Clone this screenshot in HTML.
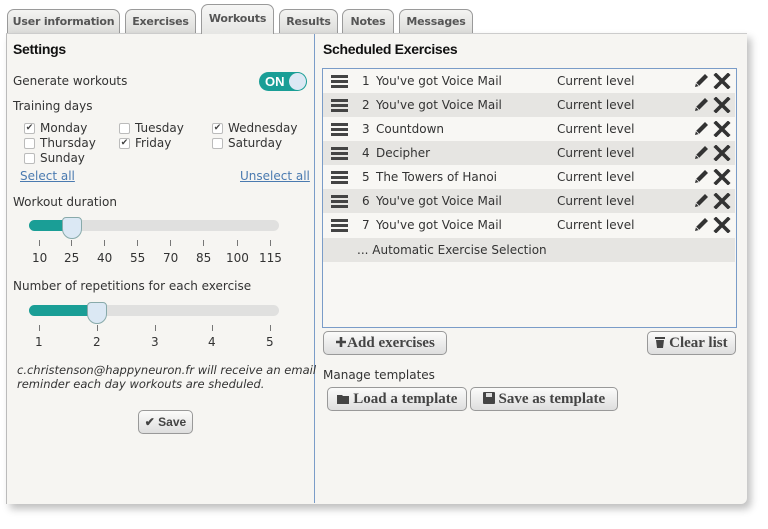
<!DOCTYPE html>
<html><head><style>
body{margin:0;width:768px;height:529px;background:#fff;font-family:"DejaVu Sans","Liberation Sans",sans-serif;color:#333;position:relative;overflow:hidden;font-size:12px}
.a{position:absolute;white-space:nowrap}
.tab{position:absolute;top:9px;height:24px;border:1px solid #9a9a9a;border-bottom:none;border-radius:7px 7px 0 0;background:linear-gradient(#f4f4f2,#dcdcda);font-weight:bold;font-size:11px;letter-spacing:-0.2px;color:#555;text-align:center;line-height:24px;box-sizing:border-box;white-space:nowrap}
.panel{position:absolute;left:6px;top:33px;width:740px;height:470px;background:#f6f5f2;border-left:1px solid #bbb;border-top:1px solid #ccc;box-shadow:4px 5px 8px rgba(0,0,0,.25);border-radius:0 0 6px 0}
.h{font-family:"Liberation Sans",sans-serif;font-weight:bold;font-size:14px;color:#111;letter-spacing:-.3px}
.cb{position:absolute;width:9px;height:9px;border:1px solid #bbb;background:#fff;border-radius:2px;font-size:9px;line-height:9px;text-align:center;color:#444}
.track{position:absolute;height:11px;background:#e0e0df;border-radius:6px}
.fill{position:absolute;height:11px;background:#1a9e96;border-radius:6px 0 0 6px}
.hd{position:absolute;width:20px;height:22px;background:#dbe8f4;border:1px solid #8aa;border-radius:4px 4px 10px 10px;box-sizing:border-box}
.tk{position:absolute;width:1px;height:6px;background:#777}
.btn{position:absolute;height:24px;border:1px solid #999;border-radius:5px;background:linear-gradient(#fbfbfa,#dedede);box-sizing:border-box;font-family:"Liberation Serif","DejaVu Serif",serif;font-weight:bold;font-size:15px;color:#444;line-height:22px;text-align:center;white-space:nowrap}
.btn svg{vertical-align:-1px}
.row{position:absolute;left:323px;width:412px;height:24px}
.row.g{background:#e6e5e2}
.row span{position:absolute;top:5px;font-size:12px;color:#333}
.hb{position:absolute;left:8px;top:6px;width:17px;height:3px;background:#444;box-shadow:0 5px 0 #444,0 10px 0 #444}
.ic{position:absolute;left:370px;top:4px}
</style></head><body>
<div class="tab" style="left:7px;width:113px">User information</div>
<div class="tab" style="left:125px;width:71px">Exercises</div>
<div class="tab" style="left:279px;width:59px">Results</div>
<div class="tab" style="left:342px;width:52px">Notes</div>
<div class="tab" style="left:399px;width:74px">Messages</div>
<div class="panel"></div>
<div class="tab" style="left:201px;top:4px;width:73px;height:30px;line-height:28px;background:linear-gradient(#f6f6f5,#e6e6e4);z-index:2">Workouts</div>
<div class="a" style="left:314px;top:34px;width:1px;height:469px;background:#7a9cc8"></div>

<div class="a h" style="left:13px;top:41px">Settings</div>
<div class="a" style="left:13px;top:74px">Generate workouts</div>
<div class="a" style="left:259px;top:72px;width:48px;height:19px;border-radius:10px;background:#1a9e96"></div>
<div class="a" style="left:265px;top:74px;color:#fff;font-weight:bold;font-family:'Liberation Sans',sans-serif;font-size:13px">ON</div>
<div class="a" style="left:289px;top:73px;width:17px;height:17px;border-radius:50%;background:#dce8f4"></div>
<div class="a" style="left:13px;top:99px">Training days</div>
<div class="cb" style="left:24px;top:123px">✔</div><div class="a" style="left:40px;top:121px">Monday</div>
<div class="cb" style="left:119px;top:123px"></div><div class="a" style="left:135px;top:121px">Tuesday</div>
<div class="cb" style="left:212px;top:123px">✔</div><div class="a" style="left:228px;top:121px">Wednesday</div>
<div class="cb" style="left:24px;top:138px"></div><div class="a" style="left:40px;top:136px">Thursday</div>
<div class="cb" style="left:119px;top:138px">✔</div><div class="a" style="left:135px;top:136px">Friday</div>
<div class="cb" style="left:212px;top:138px"></div><div class="a" style="left:228px;top:136px">Saturday</div>
<div class="cb" style="left:24px;top:153px"></div><div class="a" style="left:40px;top:151px">Sunday</div>
<div class="a" style="left:20px;top:169px;color:#4a7ab0;text-decoration:underline">Select all</div>
<div class="a" style="left:240px;top:169px;color:#4a7ab0;text-decoration:underline">Unselect all</div>

<div class="a" style="left:13px;top:195px">Workout duration</div>
<div class="track" style="left:29px;top:220px;width:250px"></div>
<div class="fill" style="left:29px;top:220px;width:42px"></div>
<div class="hd" style="left:62px;top:217px"></div>
<div class="tk" style="left:39px;top:240px"></div><div class="tk" style="left:71px;top:240px"></div><div class="tk" style="left:104px;top:240px"></div><div class="tk" style="left:137px;top:240px"></div><div class="tk" style="left:170px;top:240px"></div><div class="tk" style="left:203px;top:240px"></div><div class="tk" style="left:237px;top:240px"></div><div class="tk" style="left:270px;top:240px"></div>
<div class="a" style="left:32px;top:251px">10</div><div class="a" style="left:64px;top:251px">25</div><div class="a" style="left:97px;top:251px">40</div><div class="a" style="left:130px;top:251px">55</div><div class="a" style="left:163px;top:251px">70</div><div class="a" style="left:196px;top:251px">85</div><div class="a" style="left:226px;top:251px">100</div><div class="a" style="left:259px;top:251px">115</div>

<div class="a" style="left:13px;top:279px">Number of repetitions for each exercise</div>
<div class="track" style="left:29px;top:305px;width:250px"></div>
<div class="fill" style="left:29px;top:305px;width:68px"></div>
<div class="hd" style="left:87px;top:302px"></div>
<div class="tk" style="left:39px;top:325px"></div><div class="tk" style="left:97px;top:325px"></div><div class="tk" style="left:155px;top:325px"></div><div class="tk" style="left:212px;top:325px"></div><div class="tk" style="left:270px;top:325px"></div>
<div class="a" style="left:35px;top:335px">1</div><div class="a" style="left:93px;top:335px">2</div><div class="a" style="left:151px;top:335px">3</div><div class="a" style="left:208px;top:335px">4</div><div class="a" style="left:266px;top:335px">5</div>
<div class="a" style="left:17px;top:363px;font-style:italic;font-size:11.5px;line-height:14px">c.christenson@happyneuron.fr will receive an email<br>reminder each day workouts are sheduled.</div>
<div class="btn" style="left:138px;top:410px;width:55px;font-family:'Liberation Sans',sans-serif;font-size:12px">✔ Save</div>

<div class="a h" style="left:323px;top:41px">Scheduled Exercises</div>
<div class="a" style="left:322px;top:68px;width:413px;height:258px;border:1px solid #7a9cc8;background:#f8f7f4"></div>

<svg width="0" height="0" style="position:absolute"><defs>
<g id="pe"><path d="M12 1 L15 4 L6 13 L2 14 L3 10 Z" fill="#333"/><path d="M3 10 L6 13" stroke="#f6f6f6" stroke-width="0.8"/></g>
<g id="xx"><path d="M2 2 L14 14 M14 2 L2 14" stroke="#333" stroke-width="3.6" stroke-linecap="square"/></g>
</defs></svg>

<div class="row" style="top:69px"><i class="hb"></i><span style="left:39px">1</span><span style="left:53px">You've got Voice Mail</span><span style="left:234px">Current level</span><svg class="ic" width="40" height="16"><use href="#pe"/><use href="#xx" x="21"/></svg></div>
<div class="row g" style="top:93px"><i class="hb"></i><span style="left:39px">2</span><span style="left:53px">You've got Voice Mail</span><span style="left:234px">Current level</span><svg class="ic" width="40" height="16"><use href="#pe"/><use href="#xx" x="21"/></svg></div>
<div class="row" style="top:117px"><i class="hb"></i><span style="left:39px">3</span><span style="left:53px">Countdown</span><span style="left:234px">Current level</span><svg class="ic" width="40" height="16"><use href="#pe"/><use href="#xx" x="21"/></svg></div>
<div class="row g" style="top:141px"><i class="hb"></i><span style="left:39px">4</span><span style="left:53px">Decipher</span><span style="left:234px">Current level</span><svg class="ic" width="40" height="16"><use href="#pe"/><use href="#xx" x="21"/></svg></div>
<div class="row" style="top:165px"><i class="hb"></i><span style="left:39px">5</span><span style="left:53px">The Towers of Hanoi</span><span style="left:234px">Current level</span><svg class="ic" width="40" height="16"><use href="#pe"/><use href="#xx" x="21"/></svg></div>
<div class="row g" style="top:189px"><i class="hb"></i><span style="left:39px">6</span><span style="left:53px">You've got Voice Mail</span><span style="left:234px">Current level</span><svg class="ic" width="40" height="16"><use href="#pe"/><use href="#xx" x="21"/></svg></div>
<div class="row" style="top:213px"><i class="hb"></i><span style="left:39px">7</span><span style="left:53px">You've got Voice Mail</span><span style="left:234px">Current level</span><svg class="ic" width="40" height="16"><use href="#pe"/><use href="#xx" x="21"/></svg></div>
<div class="row g" style="top:238px"><span style="left:34px">... Automatic Exercise Selection</span></div>

<div class="btn" style="left:323px;top:331px;width:124px"><svg width="12" height="12"><path d="M6 1V11M1 6H11" stroke="#444" stroke-width="2.6"/></svg>Add exercises</div>
<div class="btn" style="left:647px;top:331px;width:89px"><svg width="10" height="12"><rect x="0" y="1" width="10" height="2" fill="#444"/><path d="M1 4H9L8 12H2Z" fill="#444"/></svg> Clear list</div>
<div class="a" style="left:323px;top:368px">Manage templates</div>
<div class="btn" style="left:327px;top:387px;width:140px"><svg width="13" height="11"><path d="M0 2H5L6 3H12V11H0Z" fill="#444"/></svg> Load a template</div>
<div class="btn" style="left:470px;top:387px;width:148px"><svg width="12" height="12"><rect x="0" y="0" width="12" height="12" rx="1" fill="#444"/><rect x="3" y="1" width="6" height="4" fill="#ddd"/></svg> Save as template</div>
</body></html>
